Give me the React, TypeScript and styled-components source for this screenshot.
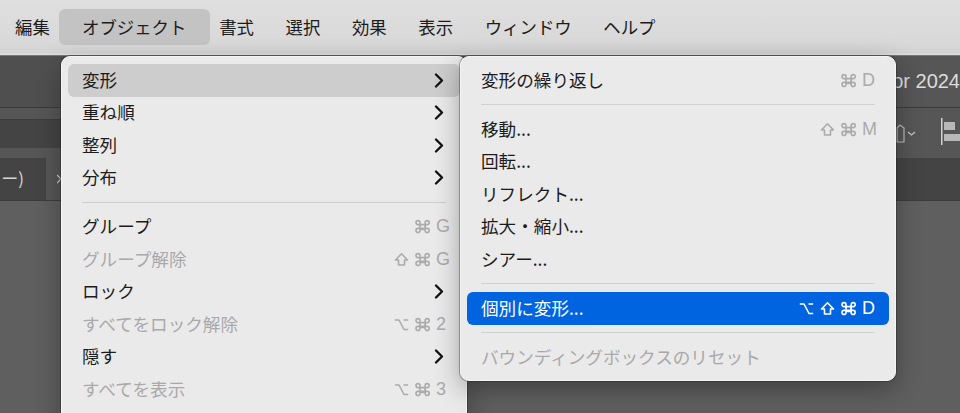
import React from "react";
import styled, { createGlobalStyle } from "styled-components";

type Mod = "cmd" | "shift" | "opt";
type Key = Mod | string;

type Entry =
  | { sep: true }
  | { sep?: false; label: string; keys?: Key[]; arrow?: boolean; off?: boolean; hot?: "grey" | "blue" };

const barItems = ["編集", "オブジェクト", "書式", "選択", "効果", "表示", "ウィンドウ", "ヘルプ"];

const mainMenu: Entry[] = [
  { label: "変形", arrow: true, hot: "grey" },
  { label: "重ね順", arrow: true },
  { label: "整列", arrow: true },
  { label: "分布", arrow: true },
  { sep: true },
  { label: "グループ", keys: ["cmd", "G"] },
  { label: "グループ解除", keys: ["shift", "cmd", "G"], off: true },
  { label: "ロック", arrow: true },
  { label: "すべてをロック解除", keys: ["opt", "cmd", "2"], off: true },
  { label: "隠す", arrow: true },
  { label: "すべてを表示", keys: ["opt", "cmd", "3"], off: true },
];

const subMenu: Entry[] = [
  { label: "変形の繰り返し", keys: ["cmd", "D"] },
  { sep: true },
  { label: "移動...", keys: ["shift", "cmd", "M"] },
  { label: "回転..." },
  { label: "リフレクト..." },
  { label: "拡大・縮小..." },
  { label: "シアー..." },
  { sep: true },
  { label: "個別に変形...", keys: ["opt", "shift", "cmd", "D"], hot: "blue" },
  { sep: true },
  { label: "バウンディングボックスのリセット", off: true },
];

const modPaths: Record<Mod, string> = {
  cmd: "M5 5.5h5v5H5zM5 5.5V3.6a2 2 0 1 0-2 2h9.2a2 2 0 1 0-2-2v7.8a2 2 0 1 0 2-2H3a2 2 0 1 0 2 2z",
  shift: "M7.5 1.8L1.5 8h3v5h6V8h3z",
  opt: "M.8 3h4.2l5 9.5h4.2M9.5 3h4.7",
};

const Global = createGlobalStyle`
  html, body { margin: 0; padding: 0; background: #5f5f5f; }
  body { font-family: "Noto Sans CJK JP", "Liberation Sans", sans-serif; }
`;

const Page = styled.div`
  width: 960px;
  height: 413px;
  display: flex;
  flex-direction: column;
  overflow: hidden;
`;

const MenuBar = styled.div`
  height: 56px;
  flex: none;
  display: flex;
  align-items: center;
  padding-bottom: 1px;
  box-sizing: border-box;
  background: linear-gradient(#dfdfdf, #d9d9d9 75%, #d3d3d3 96%, #e2e2e2);
  border-bottom: 1px solid #3f88b8;
`;

const BarItem = styled.div<{ $active?: boolean }>`
  height: 36px;
  line-height: 35px;
  font-size: 17.4px;
  color: #1c1c1c;
  padding: ${(p) => (p.$active ? "0 24px 0 23px" : "0 15.8px")};
  margin: ${(p) => (p.$active ? "0 -7px 0 -6.6px" : "0")};
  border-radius: 6px;
  background: ${(p) => (p.$active ? "#c3c3c3" : "transparent")};
  &:first-child {
    padding-left: 15px;
  }
`;

const Workspace = styled.div`
  flex: 1;
  position: relative;
  display: flex;
  flex-direction: column;
  background: #5f5f5f;
`;

const TitleRow = styled.div`
  height: 51px;
  flex: none;
  display: flex;
  align-items: center;
  justify-content: flex-end;
  background: linear-gradient(90deg, #4f4f4f, #565656);
  border-bottom: 1px solid #3a3a3a;
  font-family: "Liberation Sans", sans-serif;
  font-size: 20px;
  color: #dcdcdc;
  white-space: nowrap;
`;

const ToolRow = styled.div`
  height: 50px;
  flex: none;
  display: flex;
  align-items: center;
  justify-content: space-between;
  background: #565656;
`;

const Field = styled.div`
  width: 61px;
  height: 29px;
  background: #444;
  border-top: 1px solid #3d3d3d;
  box-sizing: border-box;
`;

const ToolIcons = styled.svg`
  width: 64px;
  height: 50px;
  display: block;
`;

const TabRow = styled.div`
  height: 42px;
  flex: none;
  display: flex;
  background: #444;
  border-bottom: 1px solid #3c3c3c;
`;

const Tab = styled.div`
  width: 45px;
  box-sizing: border-box;
  display: flex;
  justify-content: flex-end;
  padding-right: 21px;
  font-size: 17px;
  line-height: 40px;
  color: #d6d6d6;
  white-space: nowrap;
  overflow: hidden;
`;

const TabRest = styled.div`
  width: 16px;
  margin-left: 1px;
  background: #565656;
  display: flex;
  align-items: center;
  justify-content: flex-end;
`;

const CloseIcon = styled.svg`
  width: 5px;
  height: 10px;
  display: block;
  fill: none;
  stroke: #d6d6d6;
  stroke-width: 1.2;
`;

const Menu = styled.div`
  position: absolute;
  top: 0;
  background: #eaeaea;
  box-sizing: border-box;
  border: 1px solid #f5f5f5;
`;

const MainPanel = styled(Menu)`
  left: 61px;
  width: 406px;
  height: 400px;
  padding: 7px 6px;
  border-radius: 9px 9px 0 0;
  box-shadow: 0 0 0 1px rgba(30, 30, 30, 0.35), 0 10px 26px rgba(0, 0, 0, 0.3);
`;

const SubPanel = styled(Menu)`
  left: 460px;
  width: 436px;
  height: 325px;
  padding: 7px 6px;
  border-radius: 9px;
  box-shadow: 0 0 0 1px rgba(30, 30, 30, 0.35), 0 8px 26px rgba(0, 0, 0, 0.32);
`;

const Row = styled.div<{ $off?: boolean; $hot?: "grey" | "blue"; $pad: number }>`
  height: 32.5px;
  display: flex;
  align-items: center;
  justify-content: space-between;
  padding: 0 ${(p) => p.$pad}px 0 14px;
  border-radius: 6px;
  font-size: 17.6px;
  white-space: nowrap;
  color: ${(p) => (p.$hot === "blue" ? "#fff" : p.$off ? "#a9a9a9" : "#1c1c1c")};
  background: ${(p) =>
    p.$hot === "blue" ? "#0064e0" : p.$hot === "grey" ? "#cdcdcd" : "transparent"};
`;

const Label = styled.span`
  position: relative;
  top: -1px;
`;

const Keys = styled.span<{ $blue: boolean }>`
  display: flex;
  align-items: center;
  gap: 6px;
  font-family: "Liberation Sans", sans-serif;
  font-size: 18px;
  color: ${(p) => (p.$blue ? "#fff" : "#ababab")};
`;

const KeyChar = styled.span`
  width: 15px;
`;

const ModIcon = styled.svg`
  width: 15px;
  height: 15px;
  display: block;
  fill: none;
  stroke: currentColor;
  stroke-width: 1.6;
  stroke-linejoin: round;
`;

const Separator = styled.div`
  height: 1px;
  margin: 7.5px 14px 8px;
  background: #cfcfcf;
`;

const Arrow = styled.svg`
  width: 10px;
  height: 15px;
  margin-right: 7px;
  display: block;
  fill: none;
  stroke: #111;
  stroke-width: 2.3;
  stroke-linecap: round;
  stroke-linejoin: round;
`;

const isMod = (k: Key): k is Mod => k in modPaths;

function MenuRows({ items, pad }: { items: Entry[]; pad: number }) {
  return (
    <>
      {items.map((item, i) =>
        item.sep ? (
          <Separator key={i} />
        ) : (
          <Row key={i} $off={item.off} $hot={item.hot} $pad={pad}>
            <Label>{item.label}</Label>
            {item.arrow && (
              <Arrow viewBox="0 0 10 15">
                <path d="M2 1.5 L8 7.5 L2 13.5" />
              </Arrow>
            )}
            {item.keys && (
              <Keys $blue={item.hot === "blue"}>
                {item.keys.map((k) =>
                  isMod(k) ? (
                    <ModIcon key={k} viewBox="0 0 15 15">
                      <path d={modPaths[k]} />
                    </ModIcon>
                  ) : (
                    <KeyChar key={k}>{k}</KeyChar>
                  )
                )}
              </Keys>
            )}
          </Row>
        )
      )}
    </>
  );
}

export default function App() {
  return (
    <Page>
      <Global />
      <MenuBar>
        {barItems.map((name) => (
          <BarItem key={name} $active={name === "オブジェクト"}>
            {name}
          </BarItem>
        ))}
      </MenuBar>
      <Workspace>
        <TitleRow>Adobe Illustrator 2024</TitleRow>
        <ToolRow>
          <Field />
          <ToolIcons viewBox="0 0 64 50">
            <path d="M1 34V20l3-3 4 3v14z" fill="none" stroke="#bdbdbd" strokeWidth="1.2" />
            <path d="M12 24l3.5 3 3.5-3" fill="none" stroke="#c8c8c8" strokeWidth="1.2" />
            <rect x="45" y="10" width="1.5" height="27" fill="#d0d0d0" />
            <rect x="48" y="14" width="11" height="8" fill="#b8b8b8" />
            <rect x="48" y="26" width="16" height="7" fill="#b8b8b8" />
          </ToolIcons>
        </ToolRow>
        <TabRow>
          <Tab>(プレビュー)</Tab>
          <TabRest>
            <CloseIcon viewBox="0 0 5 10">
              <path d="M0 1l8 8M8 1L0 9" />
            </CloseIcon>
          </TabRest>
        </TabRow>
        <MainPanel>
          <MenuRows items={mainMenu} pad={9} />
        </MainPanel>
        <SubPanel>
          <MenuRows items={subMenu} pad={12} />
        </SubPanel>
      </Workspace>
    </Page>
  );
}
